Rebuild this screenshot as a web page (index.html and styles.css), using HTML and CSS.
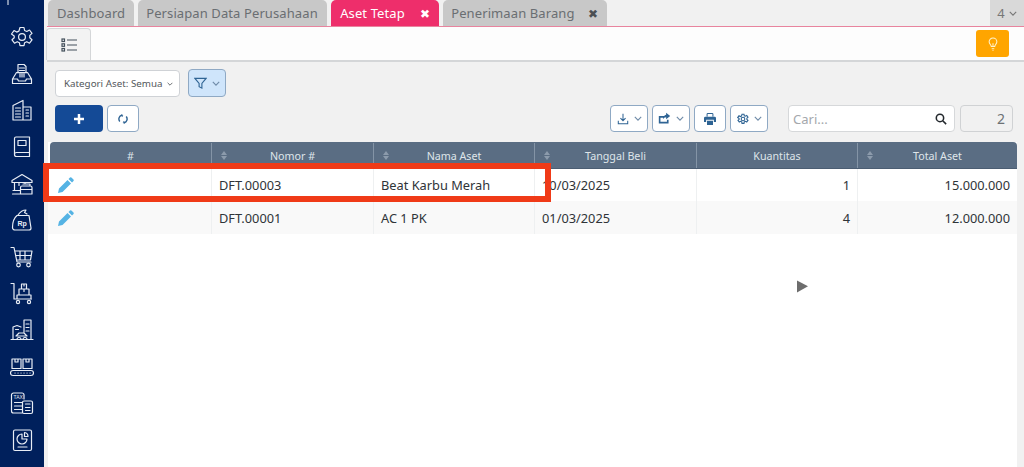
FILE: index.html
```html
<!DOCTYPE html>
<html lang="id">
<head>
<meta charset="utf-8">
<title>Aset Tetap</title>
<link rel="stylesheet" href="styles.css">
</head>
<body>
<div class="app">
  <nav class="sidebar">
    <div class="side-tick"></div>
    <svg class="side-icon" viewBox="0 0 24 24"><path d="M10 2.500h4l.6 3 2.200 1 2.700-1.500 2.500 3.400-2.200 2v2.400l2.200 2-2.500 3.400-2.700-1.500-2.200 1-.6 3h-4l-.6-3-2.200-1-2.700 1.500-2.500-3.400 2.200-2V11L1.500 9l2.500-3.400 2.700 1.500 2.200-1z"/><circle cx="12" cy="12" r="3.400"/></svg>
    <svg class="side-icon" viewBox="0 0 24 24"><path d="M8 11V2.500h6l2 2V11M2.500 17l4-6.500h11l4 6.500v4.500h-19zM2.500 17h5l1 2h7l1-2h5M9.500 6h5M9.500 8.500h5M10 11v4M12 11v4M14 11v4"/></svg>
    <svg class="side-icon" viewBox="0 0 24 24"><path d="M3 22V7.500L13 2.500V22zM13 9h8v13H3M5.500 10h5M5.500 13h5M5.500 16h5M5.500 19h5M16 12h2.500M16 15h2.500M16 18h2.500"/></svg>
    <svg class="side-icon" viewBox="0 0 24 24"><path d="M4.500 19V3.500a1.500 1.500 0 0 1 1.500-1.500h13.500v15.500H6.500a2 2 0 0 0-2 2 2 2 0 0 0 2 2h13v-4.500M8 5.500h8v5H8z"/></svg>
    <svg class="side-icon" viewBox="0 0 24 24"><path d="M2 8.500 12 2.500l10 6v2H2zM4.500 10.500v8M9 10.500v3M15 10.500v1.500M2.500 22h8M3 18.500h7.500M10.500 15.500a1.500 1.500 0 0 1 1.500-1.500h8.500a1.500 1.500 0 0 1 1.500 1.500V22H10.500zM10.500 17.500h11.500M13 12h7v2"/></svg>
    <svg class="side-icon" viewBox="0 0 24 24"><path d="M8 7c2-3 5-5 8-5l-1.500 2.500L17 6M7 7.500h12l2 12.500a2 2 0 0 1-2 2H5a2.500 2.500 0 0 1-2.500-2.500C2.500 15 4 10 7 7.500z"/><text class="glyph-label" x="7.500" y="17.500">Rp</text></svg>
    <svg class="side-icon" viewBox="0 0 24 24"><path d="M1 2.500h3l3 14.500h14M5 6h17l-1.500 9H7M10 6v9M15 6v9M5.800 10.500H21"/><circle cx="8.500" cy="20" r="1.800"/><circle cx="18.500" cy="20" r="1.800"/></svg>
    <svg class="side-icon" viewBox="0 0 24 24"><path d="M1 2.500h3v15.500h17.500M7 18v-4h14v4M9 14V8h10v6M11.500 3h5v5h-5zM14 8v2.500M14 3v2"/><circle cx="8" cy="21" r="1.600"/><circle cx="19" cy="21" r="1.600"/></svg>
    <svg class="side-icon" viewBox="0 0 24 24"><path d="M1 21.500h22M3 21.500V9l4-1.500 4 1.500M14 14V2h7v19.500M16 6h3M16 9.500h3M16 13h3M6 18l3-3h5l3 3H6zM7 21.500a2 2 0 0 1 4 0M13 21.500a2 2 0 0 1 4 0M5.500 11.500h3"/></svg>
    <svg class="side-icon" viewBox="0 0 24 24"><path d="M2 4h9v9.500H2zM13 4h9v9.500h-9zM5 4v3h3V4M16 4v3h3V4M3 15.500h18a2.200 2.200 0 0 1 0 5H3a2.200 2.200 0 0 1 0-5zM5 18h.1M8 18h.1M11 18h.1M14 18h.1M17 18h.1M20 18h.1"/></svg>
    <svg class="side-icon" viewBox="0 0 24 24"><path d="M14 8V4a2 2 0 0 0-2-2H3.500a2 2 0 0 0-2 2v16a2 2 0 0 0 2 2H13M4.500 11.500H12M4.500 15H12M4.500 18.500H12M14 10h7a1.500 1.500 0 0 1 1.500 1.500V21a1.500 1.500 0 0 1-1.500 1.500h-7a1.500 1.500 0 0 1-1.500-1.500v-9.500A1.500 1.500 0 0 1 14 10zM15.500 13h4.500M15.500 16.500h4.500M15.500 19.500h4.500"/><text class="tax-label" x="3.500" y="8">TAX</text></svg>
    <svg class="side-icon" viewBox="0 0 24 24"><path d="M5 2h15a1.500 1.500 0 0 1 1.500 1.500V21a1.500 1.500 0 0 1-1.500 1.500H5A1.500 1.500 0 0 1 3.500 21V3.500A1.500 1.500 0 0 1 5 2zM12 6a5 5 0 1 0 5 5h-5zM14.500 4.500a4 4 0 0 1 3.500 4h-3.500zM8 19h9"/></svg>
  </nav>
  <main class="main">
    <div class="tabbar">
      <div class="tab">Dashboard</div>
      <div class="tab tab-long">Persiapan Data Perusahaan</div>
      <div class="tab tab-active">Aset Tetap<span class="tab-x">✖</span></div>
      <div class="tab tab-closable">Penerimaan Barang<span class="tab-x">✖</span></div>
      <div class="tab-count">4<svg class="chev" viewBox="0 0 10 6"><path d="M1 1l4 4 4-4"/></svg></div>
    </div>
    <div class="subbar">
      <div class="subtab">
        <svg class="list-icon" viewBox="0 0 16 14"><path d="M6 2h10M6 7h10M6 12h10"/><rect x="1" y="1" width="2.500" height="2.500"/><rect x="1" y="5.800" width="2.500" height="2.500"/><rect x="1" y="10.500" width="2.500" height="2.500"/></svg>
      </div>
      <button class="hint-btn">
        <svg class="bulb" viewBox="0 0 14 16"><path d="M5 11c0-2-2.500-3-2.500-5.500a4.500 4.500 0 0 1 9 0C11.500 8 9 9 9 11zM5.500 13.500h3M6.500 15.500h1M7 11V7"/></svg>
      </button>
    </div>
    <div class="content">
      <div class="filters">
        <div class="select">Kategori Aset: Semua<svg class="chev chev-small" viewBox="0 0 10 6"><path d="M1 1l4 4 4-4"/></svg></div>
        <button class="btn btn-filter">
          <svg class="ico" viewBox="0 0 14 14"><path d="M1 1.500h12L8.500 7v5L5.500 10.500V7z"/></svg>
          <svg class="chev" viewBox="0 0 10 6"><path d="M1 1l4 4 4-4"/></svg>
        </button>
      </div>
      <div class="actions">
        <button class="btn-add"><svg class="plus" viewBox="0 0 12 12"><path d="M6 1v10M1 6h10"/></svg></button>
        <button class="btn btn-refresh"><svg class="ico ico-small ico-bold" viewBox="0 0 14 14"><path d="M2.500 10.500A5.500 5.500 0 0 1 5 1.800M11.500 3.500A5.500 5.500 0 0 1 9 12.200M5.500 .5 5 2.300l2 .7M8.500 13.500l.5-1.800-2-.7"/></svg></button>
        <div class="action-spacer"></div>
        <button class="btn btn-wide"><svg class="ico ico-small" viewBox="0 0 14 14"><path d="M7 1v7.500M4 6l3 3 3-3M1.500 9v3.500h11V9"/></svg><svg class="chev" viewBox="0 0 10 6"><path d="M1 1l4 4 4-4"/></svg></button>
        <button class="btn btn-wide"><svg class="ico ico-fill ico-share" viewBox="0 0 16 14"><path d="M1 4h7v2H3v5h8V8.500h2V13H1zM10 0l5 4-5 4V5.500C8 5.500 7 6.500 6 8c0-3 2-5 4-5.500z"/></svg><svg class="chev" viewBox="0 0 10 6"><path d="M1 1l4 4 4-4"/></svg></button>
        <button class="btn btn-print"><svg class="ico ico-fill ico-print" viewBox="0 0 14 14"><path d="M3 1.500A1.500 1.500 0 0 1 4.500 0h5A1.500 1.500 0 0 1 11 1.500V4H9.800V1.200H4.200V4H3zM1.500 4.500h11A1.500 1.500 0 0 1 14 6v4.500h-2.500V8h-9v2.500H0V6a1.500 1.500 0 0 1 1.500-1.500zM3.500 9h7v5h-7z"/></svg></button>
        <button class="btn btn-wide btn-gear"><svg class="ico ico-small" viewBox="0 0 24 24"><path class="gear-stroke" d="M10 2.500h4l.6 3 2.200 1 2.700-1.500 2.500 3.400-2.200 2v2.400l2.200 2-2.500 3.400-2.700-1.500-2.200 1-.6 3h-4l-.6-3-2.200-1-2.700 1.500-2.500-3.400 2.200-2V11L1.500 9l2.500-3.400 2.700 1.500 2.200-1z"/><circle class="gear-stroke" cx="12" cy="12" r="3.600"/></svg><svg class="chev" viewBox="0 0 10 6"><path d="M1 1l4 4 4-4"/></svg></button>
        <div class="search">
          <span>Cari...</span>
          <svg class="search-icon" viewBox="0 0 14 14"><circle cx="5.800" cy="5.800" r="4.300"/><path d="M9 9l4 4"/></svg>
        </div>
        <div class="pager">2</div>
      </div>
      <div class="table">
        <div class="tr thead">
          <div class="th">#</div>
          <div class="th"><span class="sort"></span>Nomor #</div>
          <div class="th"><span class="sort"></span>Nama Aset</div>
          <div class="th"><span class="sort"></span>Tanggal Beli</div>
          <div class="th">Kuantitas</div>
          <div class="th"><span class="sort"></span>Total Aset</div>
        </div>
        <div class="tr row row-first">
          <div class="td"><svg class="pencil" viewBox="0 0 18 18"><path d="M13 1.500a1 1 0 0 1 1.400 0l2.100 2.100a1 1 0 0 1 0 1.400L15 6.500 11.500 3zM10.500 4 14 7.500 5.500 16 1 17l1-4.500z"/></svg></div>
          <div class="td">DFT.00003</div>
          <div class="td">Beat Karbu Merah</div>
          <div class="td">10/03/2025</div>
          <div class="td num">1</div>
          <div class="td num">15.000.000</div>
        </div>
        <div class="tr row row-alt">
          <div class="td"><svg class="pencil" viewBox="0 0 18 18"><path d="M13 1.500a1 1 0 0 1 1.400 0l2.100 2.100a1 1 0 0 1 0 1.400L15 6.500 11.500 3zM10.500 4 14 7.500 5.500 16 1 17l1-4.500z"/></svg></div>
          <div class="td">DFT.00001</div>
          <div class="td">AC 1 PK</div>
          <div class="td">01/03/2025</div>
          <div class="td num">4</div>
          <div class="td num">12.000.000</div>
        </div>
        <div class="table-rest"></div>
      </div>
    </div>
  </main>
  <div class="highlight"></div>
  <svg class="cursor" viewBox="0 0 12 14"><path d="M0 .5 12 6.800 0 13.500z"/></svg>
</div>
</body>
</html>
```
FILE: styles.css
```css
* { box-sizing: border-box; }
html, body { margin: 0; height: 100%; overflow: hidden; }
body { font-family: "Noto Sans", "Open Sans", sans-serif; color: #33383d; background: #f1f1f1; }
button { font-family: inherit; padding: 0; cursor: pointer; }
.app { position: relative; display: flex; width: 1024px; height: 467px; overflow: hidden; }

.sidebar { position: relative; flex: 0 0 44px; background: #00205c; display: flex; flex-direction: column; align-items: center; padding-top: 25px; gap: 12.650px; }
.side-tick { position: absolute; left: 7px; top: 0; width: 2px; height: 5px; background: #7e8fae; }
.side-icon { width: 24px; height: 24px; flex: none; fill: none; stroke: #e8edf5; stroke-width: 1.200; stroke-linejoin: round; stroke-linecap: round; }
.tax-label { font-size: 5px; font-family: "Liberation Sans", sans-serif; fill: #e8edf5; stroke: none; }
.glyph-label { font-size: 7px; font-weight: 700; font-family: "Liberation Sans", sans-serif; fill: #e8edf5; stroke: none; }

.main { flex: 1; min-width: 0; display: flex; flex-direction: column; padding-left: 3px; }
.tabbar { flex: 0 0 27px; display: flex; gap: 4px; padding-left: 1px; border-bottom: 1px solid #e8849e; background: #f1f1f1; }
.tab { height: 26px; padding: 0 9px; display: flex; align-items: center; background: #c8c8c8; color: #6a6e72; font-size: 13px; letter-spacing: .1px; border-radius: 5px 5px 0 0; white-space: nowrap; }
.tab-long { width: 189px; padding: 0 8px; }
.tab-active { background: #ee2e6b; color: #fff; width: 108px; justify-content: space-between; }
.tab-closable { width: 164px; padding-left: 8px; justify-content: space-between; }
.tab-x { font-size: 12px; color: inherit; }
.tab-closable .tab-x { color: #4b4f53; }
.tab-count { margin-left: auto; width: 34px; height: 26px; background: #d9d9d9; color: #777; font-size: 13px; display: flex; align-items: center; justify-content: center; gap: 4px; }
.chev { width: 8px; height: 5px; fill: none; stroke: #6f8ba8; stroke-width: 1.400; flex: none; }
.tab-count .chev { stroke: #777; }

.subbar { flex: 0 0 35px; display: flex; align-items: flex-start; justify-content: space-between; background: #fdfdfd; border-bottom: 2px solid #d4d6d8; padding-right: 15px; }
.subtab { width: 45px; height: 32px; margin-top: 1px; margin-left: -1px; display: flex; align-items: center; justify-content: center; background: #f3f3f3; border: 1px solid #d4d6d8; border-bottom: 0; border-radius: 4px 4px 0 0; }
.list-icon { width: 16px; height: 14px; stroke: #44505c; stroke-width: 1.200; fill: none; }
.hint-btn { width: 33px; height: 27px; margin-top: 3px; border: 0; border-radius: 3px; background: #ffa500; display: flex; align-items: center; justify-content: center; }
.bulb { width: 12px; height: 14px; fill: none; stroke: #fff3cf; stroke-width: 1.200; }

.content { flex: 1; display: flex; flex-direction: column; min-height: 0; padding: 8px 7px 0 3px; background: #f1f1f1; }
.filters { flex: 0 0 28px; display: flex; gap: 8px; padding-left: 5px; }
.select { width: 125px; height: 27px; background: #fff; border: 1px solid #cfd2d6; border-radius: 4px; font-size: 9.800px; color: #53575b; display: flex; align-items: center; justify-content: space-between; padding: 0 6px 0 8px; white-space: nowrap; }
.select .chev-small { stroke: #53575b; }
.chev-small { width: 6px; height: 4px; }
.btn { height: 27px; border: 1px solid #8fa9c4; border-radius: 4px; background: #fff; color: #2f6494; display: flex; align-items: center; justify-content: center; gap: 5px; }
.btn-filter { width: 38px; background: #cfe5fb; margin-top: -1px; height: 28px; }
.ico { width: 13px; height: 13px; fill: none; stroke: currentColor; stroke-width: 1.200; flex: none; }
.ico-small { width: 12px; height: 12px; }
.ico-bold { width: 10px; height: 10px; stroke-width: 2; }
.ico-fill { fill: currentColor; stroke: none; }
.ico-share { width: 13px; }
.ico-print { width: 12px; height: 12px; }
.gear-stroke { stroke-width: 2.200; }
.actions { flex: 0 0 28px; margin-top: 7px; display: flex; padding-left: 5px; }
.btn-add { width: 48px; height: 27px; border: 0; border-radius: 4px; background: #144a96; display: flex; align-items: center; justify-content: center; }
.plus { width: 12px; height: 12px; stroke: #fff; stroke-width: 2.500; }
.btn-refresh { width: 32px; margin-left: 4px; }
.action-spacer { flex: 1; }
.btn-wide { width: 38px; margin-right: 4px; }
.btn-print { width: 32px; margin-right: 4px; }
.btn-gear { margin-right: 20px; }
.search { width: 167px; height: 27px; background: #fff; border: 1px solid #d6d8da; border-radius: 4px; display: flex; align-items: center; justify-content: space-between; padding: 0 7px 0 4px; font-size: 13px; color: #a4a8ac; margin-right: 5px; }
.search-icon { width: 12px; height: 12px; fill: none; stroke: #23282d; stroke-width: 1.800; }
.pager { width: 53px; height: 27px; background: #f1f1f1; border: 1px solid #d0d2d4; border-radius: 4px; font-size: 14px; color: #6d7175; text-align: right; padding: 3px 7px 0 0; margin-right: 4px; }

.table { flex: 1; margin: 9px 0 0 -2px; display: flex; flex-direction: column; background: #fff; min-height: 0; }
.tr { display: grid; grid-template-columns: 161px 162px 161px 162px 161px 1fr; }
.thead { flex: none; margin-left: 2px; height: 27px; padding-top: 1px; background: #5a6d83; color: #dfe5ea; font-size: 10.700px; border-radius: 4px 4px 0 0; border-bottom: 1px solid #4b5d72; }
.th { position: relative; display: flex; align-items: center; justify-content: center; border-left: 1px solid #8494a6; }
.th:first-child { border-left: 0; }
.sort { position: absolute; left: 9px; top: 8px; width: 6px; height: 9px; }
.sort::before, .sort::after { content: ""; position: absolute; left: 0; border-left: 3px solid transparent; border-right: 3px solid transparent; }
.sort::before { top: 0; border-bottom: 4px solid #8c9bac; }
.sort::after { bottom: 0; border-top: 4px solid #8c9bac; }
.row { flex: none; height: 33px; font-size: 12.800px; color: #2f3438; grid-template-columns: 163px 162px 161px 162px 161px 1fr; }
.row-first { background: #fff; height: 32px; }
.row-alt { background: #f9f9f9; }
.td { display: flex; align-items: center; padding: 0 7px; border-left: 1px solid #eef0f1; }
.td:first-child { border-left: 0; padding-left: 9px; }
.num { justify-content: flex-end; }
.pencil { width: 18px; height: 18px; fill: #55b3e4; }
.table-rest { flex: 1; background: #fff; }

.highlight { position: absolute; left: 43px; top: 163px; width: 508px; height: 39px; border: 6px solid #f03a17; pointer-events: none; }
.cursor { position: absolute; left: 797px; top: 280px; width: 11px; height: 13px; fill: #6d6d6d; filter: blur(.5px); }
```
